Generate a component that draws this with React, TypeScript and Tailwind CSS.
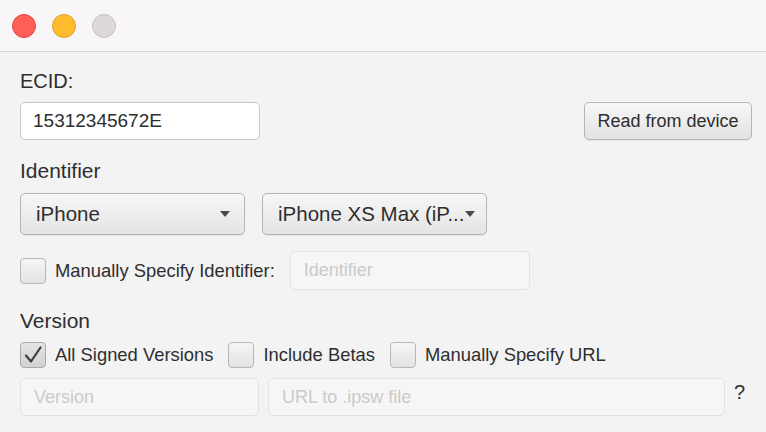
import { useState } from 'react';

const FONT = { fontFamily: '"Liberation Sans", Arial, sans-serif' };

function TrafficLights() {
  return (
    <div className="flex items-center gap-4 pl-3 h-[52px] bg-[#f8f6f9] border-b border-[#d6d3d6]">
      <span className="w-6 h-6 rounded-full bg-[#ff5f57] border border-[#e2463f]" />
      <span className="w-6 h-6 rounded-full bg-[#febc2e] border border-[#dea123]" />
      <span className="w-6 h-6 rounded-full bg-[#dcd8dc] border border-[#c4c0c4]" />
    </div>
  );
}

function Checkbox({ checked, label }: { checked?: boolean; label: string }) {
  return (
    <label className="flex items-center gap-[9px] shrink-0">
      <span
        className={
          checked
            ? 'w-[26px] h-[26px] rounded-[4px] border border-[#a9a9a9] bg-gradient-to-b from-[#e4e4e4] to-[#d2d2d2] flex items-center justify-center'
            : 'w-[26px] h-[26px] rounded-[4px] border border-[#b8b8b8] bg-gradient-to-b from-[#f6f6f6] to-[#e2e2e2]'
        }
      >
        {checked && (
          <svg width="20" height="20" viewBox="0 0 20 20">
            <path d="M3 10.5 L8 16.5 L17.5 2.5" fill="none" stroke="#3d3d3d" strokeWidth="2.2" strokeLinecap="round" strokeLinejoin="round" />
          </svg>
        )}
      </span>
      <span className="text-[18.4px] text-[#2e2e2e] leading-6">{label}</span>
    </label>
  );
}

function Dropdown({ text }: { text: string }) {
  return (
    <div className="w-[225px] h-[42px] rounded-[5px] border border-[#b5b5b5] bg-gradient-to-b from-[#f7f7f7] to-[#e4e4e4] flex items-center pl-[15px] pr-[14px] shadow-[0_1px_0_rgba(0,0,0,0.06)]">
      <span className="text-[20.5px] text-[#2e2e2e] whitespace-nowrap">{text}</span>
      <svg width="10" height="6" viewBox="0 0 10 6" className="shrink-0 ml-auto">
        <path d="M0 0 H10 L5 6 Z" fill="#4a4a4a" />
      </svg>
    </div>
  );
}

function DisabledInput({ placeholder, className }: { placeholder: string; className: string }) {
  return (
    <div
      className={`rounded-[5px] border border-[#e2e2e2] bg-[#f6f6f6] flex items-center px-[13px] text-[18px] text-[#cacaca] ${className}`}
    >
      {placeholder}
    </div>
  );
}

export default function App() {
  const [ecid, setEcid] = useState('15312345672E');

  return (
    <div className="w-[766px] h-[432px] bg-[#f3f3f3] overflow-hidden" style={FONT}>
      <TrafficLights />
      <div className="pl-5 pr-[14px] pt-[17px] flex flex-col">
        <div className="text-[20px] leading-6 text-[#2e2e2e]">ECID:</div>
        <div className="mt-[9px] flex items-center justify-between">
          <input
            value={ecid}
            onChange={(e) => setEcid(e.target.value)}
            className="w-[240px] h-[38px] rounded-[5px] border border-[#c9c9c9] bg-white px-[12px] text-[19px] text-[#2e2e2e] outline-none"
            style={FONT}
          />
          <button
            type="button"
            className="w-[168px] h-[38px] rounded-[5px] border border-[#b5b5b5] bg-gradient-to-b from-[#f7f7f7] to-[#e3e3e3] text-[18px] text-[#2e2e2e] shadow-[0_1px_0_rgba(0,0,0,0.06)]"
            style={FONT}
          >
            Read from device
          </button>
        </div>

        <div className="mt-[19px] text-[21px] leading-6 text-[#2e2e2e]">Identifier</div>
        <div className="mt-[10px] flex gap-[17px]">
          <Dropdown text="iPhone" />
          <Dropdown text="iPhone XS Max (iP..." />
        </div>

        <div className="mt-4 flex items-center gap-[15px]">
          <Checkbox label="Manually Specify Identifier:" />
          <DisabledInput placeholder="Identifier" className="w-[240px] h-[39px]" />
        </div>

        <div className="mt-[19px] text-[21px] leading-6 text-[#2e2e2e]">Version</div>
        <div className="mt-[9px] flex items-center gap-[15px]">
          <Checkbox checked label="All Signed Versions" />
          <Checkbox label="Include Betas" />
          <Checkbox label="Manually Specify URL" />
        </div>

        <div className="mt-[9px] flex items-center">
          <DisabledInput placeholder="Version" className="w-[239px] h-[38px]" />
          <DisabledInput placeholder="URL to .ipsw file" className="ml-[9px] w-[457px] h-[38px]" />
          <span className="ml-[9px] mb-[10px] text-[20px] text-[#2e2e2e]">?</span>
        </div>
      </div>
    </div>
  );
}
